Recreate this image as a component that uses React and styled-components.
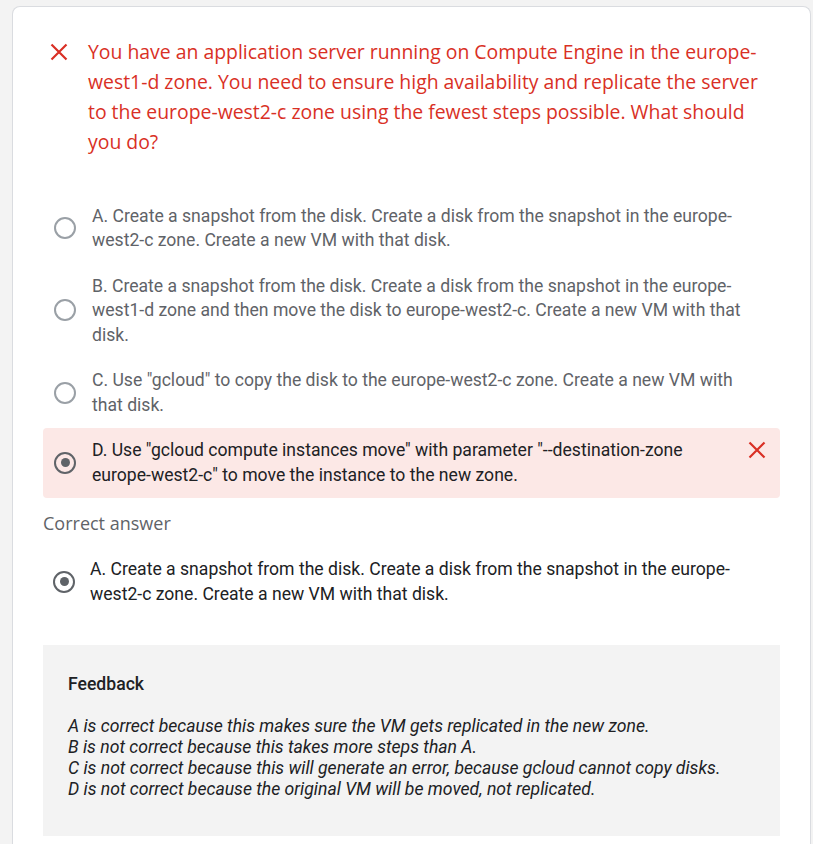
import React from 'react';
import styled, { createGlobalStyle } from 'styled-components';

const GlobalStyle = createGlobalStyle`
  body {
    margin: 0;
    background: #f3f3f3;
    font-family: Roboto, "Liberation Sans", sans-serif;
  }
`;

const Page = styled.div`
  box-sizing: border-box;
  min-height: 100vh;
  display: flex;
  flex-direction: column;
  padding: 6px 2px 0 12px;
`;

const Card = styled.div`
  flex: 1;
  background: #fff;
  border: 1px solid #dadce0;
  border-bottom: none;
  border-radius: 8px 8px 0 0;
  padding: 30px 30px 8px 30px;
`;

const Question = styled.div`
  display: flex;
  align-items: flex-start;
  gap: 20px;
  padding-left: 7px;
  padding-right: 16px;
  color: #d93025;
  font-family: "Open Sans", sans-serif;
  font-size: 19.4px;
  line-height: 30px;
`;

const IconBox = styled.span`
  display: flex;
  flex: none;
  align-items: center;
  justify-content: center;
  width: ${(p) => p.size}px;
  height: ${(p) => p.lh}px;
`;

const OptionList = styled.div`
  margin-top: 36px;
  display: flex;
  flex-direction: column;
`;

const Option = styled.div`
  display: flex;
  align-items: center;
  gap: 16px;
  padding: 10.5px 20px 10.5px 11px;
  border-radius: 4px;
  background: ${(p) => (p.wrong ? '#fce8e6' : 'transparent')};
  color: ${(p) => (p.chosen ? '#202124' : '#5f6368')};
  font-size: 17.6px;
  line-height: 24.5px;
`;

const OptionText = styled.div`
  flex: 1;
`;

const Radio = styled.span`
  flex: none;
  box-sizing: border-box;
  width: 22px;
  height: 22px;
  border-radius: 50%;
  border: 2px solid ${(p) => (p.checked ? '#5f6368' : '#9aa0a6')};
  display: flex;
  align-items: center;
  justify-content: center;

  &::after {
    content: '';
    display: ${(p) => (p.checked ? 'block' : 'none')};
    width: 9px;
    height: 9px;
    border-radius: 50%;
    background: #5f6368;
  }
`;

const MarkSlot = styled.span`
  align-self: flex-start;
  flex: none;
  margin-left: 16px;
  margin-right: -6px;
`;

const SectionLabel = styled.div`
  margin-top: 13px;
  color: #5f6368;
  font-family: "Open Sans", sans-serif;
  font-size: 18px;
  line-height: 24px;
`;

const Answer = styled(Option)`
  margin-top: 12px;
  padding-left: 10px;
  gap: 15px;
`;

const Feedback = styled.div`
  margin-top: 28px;
  background: #f3f3f3;
  padding: 27px 25px 36px;
  color: #202124;
`;

const FeedbackTitle = styled.div`
  font-size: 17.6px;
  font-weight: 500;
  line-height: 24px;
`;

const FeedbackBody = styled.div`
  margin-top: 20px;
  font-size: 17.6px;
  font-style: italic;
  line-height: 21px;
`;

const Cross = ({ size = 18 }) => (
  <svg width={size} height={size} viewBox="0 0 18 18">
    <path d="M1.5 1.5 L16.5 16.5 M16.5 1.5 L1.5 16.5" stroke="#d93025" strokeWidth="2.2" fill="none" />
  </svg>
);

const options = [
  'A. Create a snapshot from the disk. Create a disk from the snapshot in the europe-west2-c zone. Create a new VM with that disk.',
  'B. Create a snapshot from the disk. Create a disk from the snapshot in the europe-west1-d zone and then move the disk to europe-west2-c. Create a new VM with that disk.',
  'C. Use "gcloud" to copy the disk to the europe-west2-c zone. Create a new VM with that disk.',
  'D. Use "gcloud compute instances move" with parameter "--destination-zone europe-west2-c" to move the instance to the new zone.',
];

const feedback = [
  'A is correct because this makes sure the VM gets replicated in the new zone.',
  'B is not correct because this takes more steps than A.',
  'C is not correct because this will generate an error, because gcloud cannot copy disks.',
  'D is not correct because the original VM will be moved, not replicated.',
];

const App = () => (
  <Page>
    <GlobalStyle />
    <Card>
      <Question>
        <IconBox size={18} lh={30}>
          <Cross />
        </IconBox>
        <div>
          You have an application server running on Compute Engine in the europe-west1-d zone. You need to ensure
          high availability and replicate the server to the europe-west2-c zone using the fewest steps possible.
          What should you do?
        </div>
      </Question>

      <OptionList>
        {options.map((text, i) => {
          const chosen = i === 3;
          return (
            <Option key={text} wrong={chosen} chosen={chosen}>
              <Radio checked={chosen} />
              <OptionText>{text}</OptionText>
              {chosen && (
                <MarkSlot>
                  <IconBox size={18} lh={24}>
                    <Cross />
                  </IconBox>
                </MarkSlot>
              )}
            </Option>
          );
        })}
      </OptionList>

      <SectionLabel>Correct answer</SectionLabel>
      <Answer chosen>
        <Radio checked />
        <OptionText>{options[0]}</OptionText>
      </Answer>

      <Feedback>
        <FeedbackTitle>Feedback</FeedbackTitle>
        <FeedbackBody>
          {feedback.map((line) => (
            <div key={line}>{line}</div>
          ))}
        </FeedbackBody>
      </Feedback>
    </Card>
  </Page>
);

export default App;
